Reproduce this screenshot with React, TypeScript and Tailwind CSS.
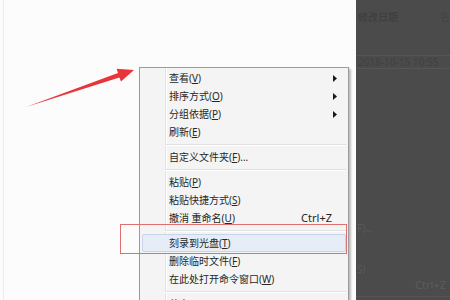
import React from "react";

type Item =
  | { sep: true }
  | { sep?: false; label: string; key: string; suffix?: string; sub?: boolean; shortcut?: string; hl?: boolean };

const items: Item[] = [
  { label: "查看", key: "V", sub: true },
  { label: "排序方式", key: "O", sub: true },
  { label: "分组依据", key: "P", sub: true },
  { label: "刷新", key: "E" },
  { sep: true },
  { label: "自定义文件夹", key: "F", suffix: "..." },
  { sep: true },
  { label: "粘贴", key: "P" },
  { label: "粘贴快捷方式", key: "S" },
  { label: "撤消 重命名", key: "U", shortcut: "Ctrl+Z" },
  { sep: true },
  { label: "刻录到光盘", key: "T", hl: true },
  { label: "删除临时文件", key: "F" },
  { label: "在此处打开命令窗口", key: "W" },
  { sep: true },
  { label: "共享", key: "H", sub: true },
];

const font = { fontFamily: '"Noto Sans", "Noto Sans CJK SC", sans-serif' };

function SubArrow() {
  return (
    <svg width="4" height="7" viewBox="0 0 4 7" className="shrink-0">
      <polygon points="0,0 4,3.5 0,7" fill="#1a1a1a" />
    </svg>
  );
}

function ContextMenu() {
  return (
    <div className="absolute left-[139px] top-[67px] w-[210px] h-[260px] bg-[#f4f4f4] border border-[#9a9a9a] shadow-[2px_2px_2px_rgba(0,0,0,0.25)]">
      {/* gutter line */}
      <div className="absolute left-[25px] top-0 bottom-0 w-px bg-[#e2e2e2]" />
      <div className="absolute left-[26px] top-0 bottom-0 w-px bg-white" />
      <div className="relative pt-px px-[2px]">
        {items.map((it, i) =>
          it.sep ? (
            <div key={i} className="h-[7px] flex items-center pl-[23px]">
              <div className="w-full">
                <div className="h-px bg-[#e0e0e0]" />
                <div className="h-px bg-white" />
              </div>
            </div>
          ) : (
            <div
              key={i}
              className={`h-[18px] flex items-center pl-[26px] pr-[8px] text-[10px] text-[#262626] rounded-[2px] ${
                it.hl ? "bg-[#e6edf6] border border-[#c5d5ea]" : "border border-transparent"
              }`}
            >
              <span className="flex-1 whitespace-nowrap">
                {it.label}(<u>{it.key}</u>){it.suffix}
              </span>
              {it.shortcut && <span className="text-[11px] mr-[5px]">{it.shortcut}</span>}
              {it.sub && <SubArrow />}
            </div>
          ),
        )}
      </div>
    </div>
  );
}

export default function App() {
  return (
    <div className="relative w-[450px] h-[300px] overflow-hidden flex" style={font}>
      <div className="w-[356px] h-full bg-[#fcfcfd] flex">
        <div className="ml-[3px] w-px h-full bg-[#ececee]" />
      </div>
      <div className="flex-1 h-full bg-[#4b4b4b] text-[10px] text-[#3c3c3c] flex flex-col">
        <div className="h-[55px] pt-[10px] pl-[2px] flex justify-between pr-0">
          <span>修改日期</span>
          <span className="text-[#444]">名</span>
        </div>
        <div className="h-px bg-[#555]" />
        <div className="h-[12px] pl-[2px] leading-[12px] text-[#404040] whitespace-nowrap">2018-10-15 10:55</div>
        <div className="h-px bg-[#555]" />
        <div className="h-[152px]" />
        <div className="pl-[1px] text-[#5a5a5a]">F)...</div>
        <div className="h-[26px]" />
        <div className="pl-[1px] text-[#5a5a5a]">S)</div>
        <div className="flex justify-end pr-[4px] text-[#5c5c5c] text-[11px]">Ctrl+Z</div>
        <div className="h-px bg-[#555] mt-[2px]" />
      </div>

      <ContextMenu />

      {/* red annotation box */}
      <div className="absolute left-[120px] top-[224px] w-[227px] h-[30px] border border-[#e07070]" />

      {/* red arrow */}
      <svg className="absolute left-0 top-0" width="450" height="300" viewBox="0 0 450 300">
        <polygon
          points="26,107 119.4,77.6 121,81.5 134,70 116.6,68.8 118,73 "
          fill="#e8353a"
        />
      </svg>
    </div>
  );
}
